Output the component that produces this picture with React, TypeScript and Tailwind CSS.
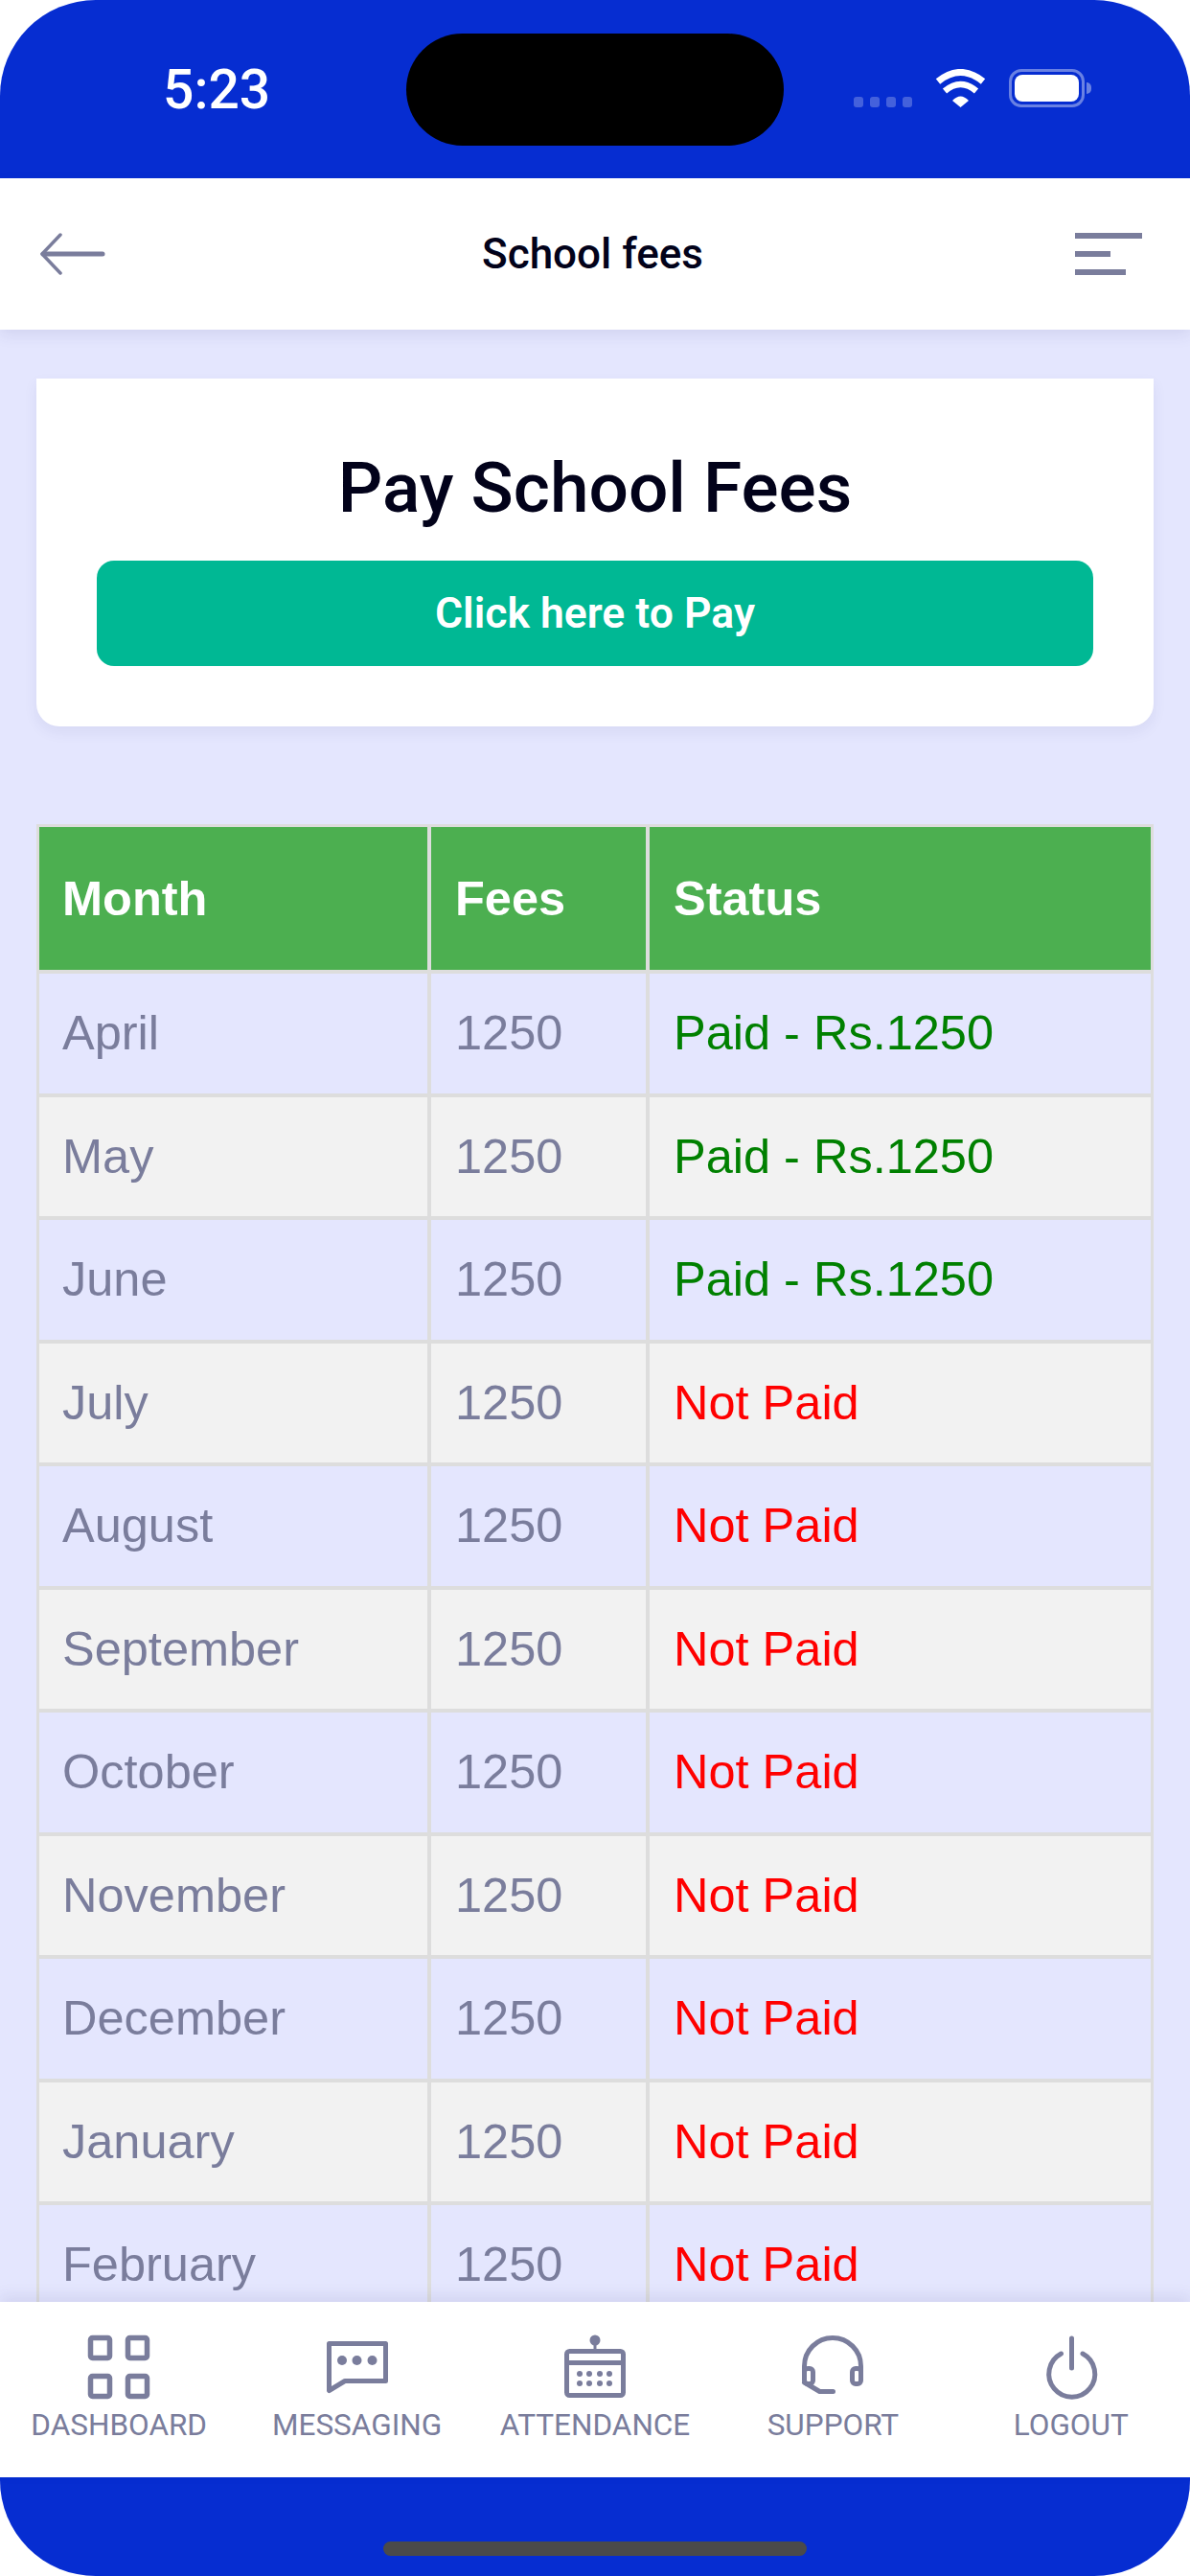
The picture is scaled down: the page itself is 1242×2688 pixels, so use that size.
const months = [
  "April",
  "May",
  "June",
  "July",
  "August",
  "September",
  "October",
  "November",
  "December",
  "January",
  "February",
];

const paidMonths = ["April", "May", "June"];

function BackIcon() {
  return (
    <svg width="68" height="44" viewBox="0 0 68 44" fill="none" stroke="#7a7d9c" strokeLinecap="round" strokeLinejoin="round">
      <path d="M65 22H3" strokeWidth="5" />
      <path d="M21 2L2 22l19 20" strokeWidth="3.5" />
    </svg>
  );
}

function WifiIcon() {
  return (
    <svg width="53" height="40" viewBox="0 0 53 40" fill="none">
      <path d="M3 13Q26.5-6 50 13" stroke="white" strokeWidth="7" />
      <path d="M10 23Q26.5 9 43 23" stroke="white" strokeWidth="6.5" />
      <path d="M18 33Q26.5 24 35 33L26.5 40Z" fill="white" />
    </svg>
  );
}

function DashboardIcon() {
  return (
    <svg width="70" height="70" viewBox="0 0 70 70" fill="none" stroke="#7a7d9c" strokeWidth="5.5">
      <rect x="5.500" y="4.500" width="20" height="21" rx="2" />
      <rect x="44.500" y="4.500" width="20" height="21" rx="2" />
      <rect x="5.500" y="44.500" width="20" height="21" rx="2" />
      <rect x="44.500" y="44.500" width="20" height="21" rx="2" />
    </svg>
  );
}

function MessagingIcon() {
  return (
    <svg width="70" height="70" viewBox="0 0 70 70" fill="none">
      <path d="M5.500 10.500h59v39H22l-16.500 10z" stroke="#7a7d9c" strokeWidth="5" strokeLinejoin="round" />
      <circle cx="19" cy="28" r="5" fill="#7a7d9c" />
      <circle cx="34.500" cy="28" r="5" fill="#7a7d9c" />
      <circle cx="50.500" cy="28" r="5" fill="#7a7d9c" />
    </svg>
  );
}

function AttendanceIcon() {
  const dots = [19, 29, 40, 50];
  return (
    <svg width="70" height="70" viewBox="0 0 70 70" fill="none">
      <circle cx="35" cy="7" r="5.500" fill="#7a7d9c" />
      <path d="M35 10v8" stroke="#7a7d9c" strokeWidth="3" />
      <rect x="5.500" y="18.500" width="59" height="46" rx="3" stroke="#7a7d9c" strokeWidth="5" />
      <path d="M5.500 30.500h59" stroke="#7a7d9c" strokeWidth="5" />
      {dots.map((x) => (
        <circle key={x} cx={x} cy="42" r="3" fill="#7a7d9c" />
      ))}
      {dots.map((x) => (
        <circle key={x} cx={x} cy="52" r="3" fill="#7a7d9c" />
      ))}
    </svg>
  );
}

function SupportIcon() {
  return (
    <svg width="70" height="70" viewBox="0 0 70 70" fill="none" stroke="#7a7d9c" strokeWidth="5" strokeLinecap="round" strokeLinejoin="round">
      <path d="M5.500 42V34a29.500 29.500 0 0 1 59 0v8" />
      <rect x="5.500" y="36.500" width="9" height="16" rx="3.500" />
      <rect x="55.500" y="36.500" width="9" height="16" rx="3.500" />
      <path d="M5.500 51l16 9.500h14" />
    </svg>
  );
}

function LogoutIcon() {
  return (
    <svg width="70" height="70" viewBox="0 0 70 70" fill="none" stroke="#7a7d9c" strokeWidth="5" strokeLinecap="round">
      <path d="M35.500 5v31" />
      <path d="M24.500 21A24 24 0 1 0 47 21" />
    </svg>
  );
}

const navItems = [
  { label: "DASHBOARD", icon: <DashboardIcon /> },
  { label: "MESSAGING", icon: <MessagingIcon /> },
  { label: "ATTENDANCE", icon: <AttendanceIcon /> },
  { label: "SUPPORT", icon: <SupportIcon /> },
  { label: "LOGOUT", icon: <LogoutIcon /> },
];

export default function App() {
  return (
    <div className="flex h-[2688px] w-[1242px] flex-col overflow-hidden rounded-[100px] bg-[#e4e6fe] font-['Liberation_Sans',sans-serif]">
      {/* Status bar */}
      <div className="flex h-[186px] shrink-0 items-start bg-[#062dd1]">
        <div className="mt-[63px] w-[424px] pl-[170px] font-['Roboto',sans-serif] text-[57px] leading-[61px] font-medium whitespace-nowrap text-white">
          5:23
        </div>
        <div className="mt-[35px] h-[117px] w-[394px] rounded-full bg-black" />
        <div className="mt-[101px] ml-[73px] flex gap-[7px]">
          <div className="h-[11px] w-[10px] rounded-[3px] bg-white/25" />
          <div className="h-[11px] w-[10px] rounded-[3px] bg-white/25" />
          <div className="h-[11px] w-[10px] rounded-[3px] bg-white/25" />
          <div className="h-[11px] w-[10px] rounded-[3px] bg-white/25" />
        </div>
        <div className="mt-[72px] ml-[24px]">
          <WifiIcon />
        </div>
        <div className="mt-[72px] ml-[24px] flex items-center gap-[2px]">
          <div className="flex h-[40px] w-[79px] items-center justify-center rounded-[13px] border-[3px] border-white/40">
            <div className="h-[28px] w-[67px] rounded-[8px] bg-white" />
          </div>
          <div className="h-[12px] w-[5px] rounded-r-full bg-white/40" />
        </div>
      </div>

      {/* Header */}
      <header className="relative z-10 flex h-[158px] shrink-0 items-center justify-between bg-white pr-[50px] pl-[42px] shadow-[0_6px_14px_rgba(60,60,130,0.1)]">
        <BackIcon />
        <h1 className="ml-[5px] font-['Roboto',sans-serif] text-[44px] font-medium text-[#02021a]">School fees</h1>
        <div className="flex w-[70px] flex-col items-start gap-[13px]">
          <div className="h-[6px] w-[70px] bg-[#7a7d9c]" />
          <div className="h-[6px] w-[37px] bg-[#7a7d9c]" />
          <div className="h-[6px] w-[53px] bg-[#7a7d9c]" />
        </div>
      </header>

      <main className="min-h-0 flex-1 overflow-hidden px-[38px] pt-[51px]">
        {/* Pay card */}
        <div className="flex h-[363px] flex-col items-center rounded-b-[24px] bg-white px-[63px] pt-[72px] shadow-[0_6px_14px_rgba(60,60,130,0.08)]">
          <h2 className="font-['Roboto',sans-serif] text-[73px] leading-[84px] font-medium text-[#02021a]">Pay School Fees</h2>
          <button className="mt-[34px] h-[110px] w-full rounded-[18px] bg-[#00b894] font-['Roboto',sans-serif] text-[44.5px] font-semibold text-white">
            Click here to Pay
          </button>
        </div>

        {/* Fees table */}
        <div className="mt-[102px] border-[3px] border-b-0 border-[#ddd] text-[50.5px] text-[#7a7d9c]">
          <div className="grid h-[153px] grid-cols-[409px_228px_1fr] border-b-4 border-[#ddd] bg-[#4caf50] font-bold text-white">
            <div className="flex items-center border-r-4 border-[#ddd] pl-[24px]">Month</div>
            <div className="flex items-center border-r-4 border-[#ddd] pl-[25px]">Fees</div>
            <div className="flex items-center pl-[25px]">Status</div>
          </div>
          {months.map((month, i) => {
            const paid = paidMonths.includes(month);
            return (
              <div
                key={month}
                className={
                  i % 2 === 1
                    ? "grid h-[128.5px] grid-cols-[409px_228px_1fr] border-b-4 border-[#ddd] bg-[#f2f2f2]"
                    : "grid h-[128.5px] grid-cols-[409px_228px_1fr] border-b-4 border-[#ddd]"
                }
              >
                <div className="flex items-center border-r-4 border-[#ddd] pl-[24px]">{month}</div>
                <div className="flex items-center border-r-4 border-[#ddd] pl-[25px]">1250</div>
                <div className={paid ? "flex items-center pl-[25px] text-[#008000]" : "flex items-center pl-[25px] text-[#ff0000]"}>
                  {paid ? "Paid - Rs.1250" : "Not Paid"}
                </div>
              </div>
            );
          })}
        </div>
      </main>

      {/* Bottom navigation */}
      <nav className="relative z-10 grid h-[183px] shrink-0 grid-cols-5 bg-white pt-[33px] shadow-[0_-6px_14px_rgba(60,60,130,0.1)]">
        {navItems.map((item) => (
          <div key={item.label} className="flex flex-col items-center">
            {item.icon}
            <span className="mt-[7px] font-['Roboto',sans-serif] text-[31.5px] leading-[38px] text-[#7a7d9c]">{item.label}</span>
          </div>
        ))}
      </nav>

      {/* Home indicator */}
      <div className="flex h-[103px] shrink-0 justify-center bg-[#062dd1] pt-[67px]">
        <div className="h-[15px] w-[442px] rounded-full bg-[#4a4a4a]" />
      </div>
    </div>
  );
}
